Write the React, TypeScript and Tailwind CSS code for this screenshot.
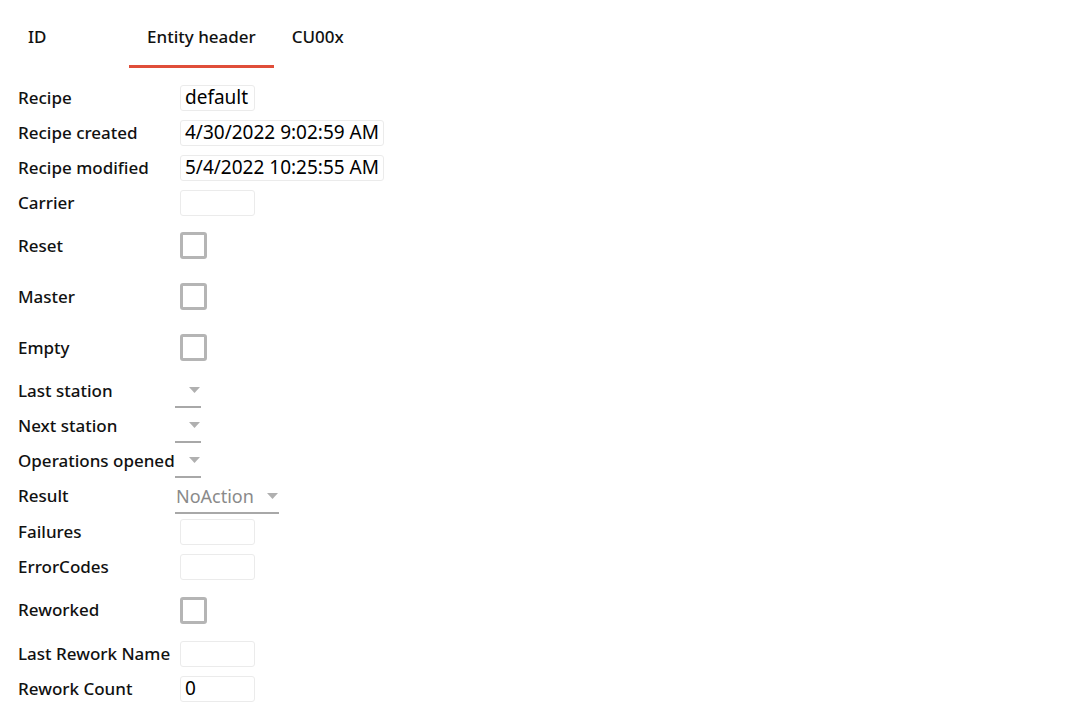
import React from "react";

type Row =
  | { kind: "text"; label: string; value?: string }
  | { kind: "check"; label: string }
  | { kind: "select"; label: string; value?: string };

const rows: Row[] = [
  { kind: "text", label: "Recipe", value: "default" },
  { kind: "text", label: "Recipe created", value: "4/30/2022 9:02:59 AM" },
  { kind: "text", label: "Recipe modified", value: "5/4/2022 10:25:55 AM" },
  { kind: "text", label: "Carrier" },
  { kind: "check", label: "Reset" },
  { kind: "check", label: "Master" },
  { kind: "check", label: "Empty" },
  { kind: "select", label: "Last station" },
  { kind: "select", label: "Next station" },
  { kind: "select", label: "Operations opened" },
  { kind: "select", label: "Result", value: "NoAction" },
  { kind: "text", label: "Failures" },
  { kind: "text", label: "ErrorCodes" },
  { kind: "check", label: "Reworked" },
  { kind: "text", label: "Last Rework Name" },
  { kind: "text", label: "Rework Count", value: "0" },
];

function Arrow() {
  return (
    <svg width="11" height="6" viewBox="0 0 11 6" className="shrink-0">
      <path d="M0 0 L11 0 L5.5 6 Z" fill="#b0b0b0" />
    </svg>
  );
}

function Field({ row }: { row: Row }) {
  if (row.kind === "check") {
    return <div className="w-[27px] h-[27px] border-[3px] border-[#b5b5b5] rounded-[3px] bg-white" />;
  }
  if (row.kind === "select") {
    return (
      <div
        className={`-ml-[5px] h-[35px] flex items-center border-b-2 border-[#a8a8a8] ${
          row.value ? "w-[104px] mt-[1px]" : "w-[26px]"
        }`}
      >
        {row.value && (
          <span className="pl-[1px] text-[18px] text-[#8a8a8a] leading-none">{row.value}</span>
        )}
        <span className="ml-auto mr-[1px]">
          <Arrow />
        </span>
      </div>
    );
  }
  return (
    <div className="min-w-[75px] h-[26px] px-[4px] flex items-center border border-[#ebebeb] rounded-[3px] text-[19px] text-black leading-none">
      {row.value}
    </div>
  );
}

const tabs = ["ID", "Entity header", "CU00x"];

export default function App() {
  return (
    <div
      className="w-[1089px] h-[726px] bg-white text-[#111] overflow-hidden"
      style={{ fontFamily: '"Noto Sans", "Open Sans", sans-serif' }}
    >
      <div className="flex pl-[10px]">
        {tabs.map((t, i) => (
          <div
            key={t}
            className={`h-[68px] pt-[9px] px-[18px] flex items-center text-[17px] font-medium border-b-[3px] ${
              i === 1 ? "border-[#e04e39]" : "border-transparent"
            } ${i === 0 ? "w-[119px]" : ""}`}
          >
            {t}
          </div>
        ))}
      </div>
      <div className="pt-[12px] pl-[18px] flex flex-col">
        {rows.map((row) => (
          <div
            key={row.label}
            className={`flex items-center ${
              row.kind === "check"
                ? row.label === "Reworked"
                  ? "h-[52px]"
                  : "h-[51px]"
                : row.kind === "select" && row.value
                  ? "h-[36px]"
                  : "h-[35px]"
            }`}
          >
            <div className="w-[162px] text-[17px] font-medium whitespace-nowrap">{row.label}</div>
            <Field row={row} />
          </div>
        ))}
      </div>
    </div>
  );
}
